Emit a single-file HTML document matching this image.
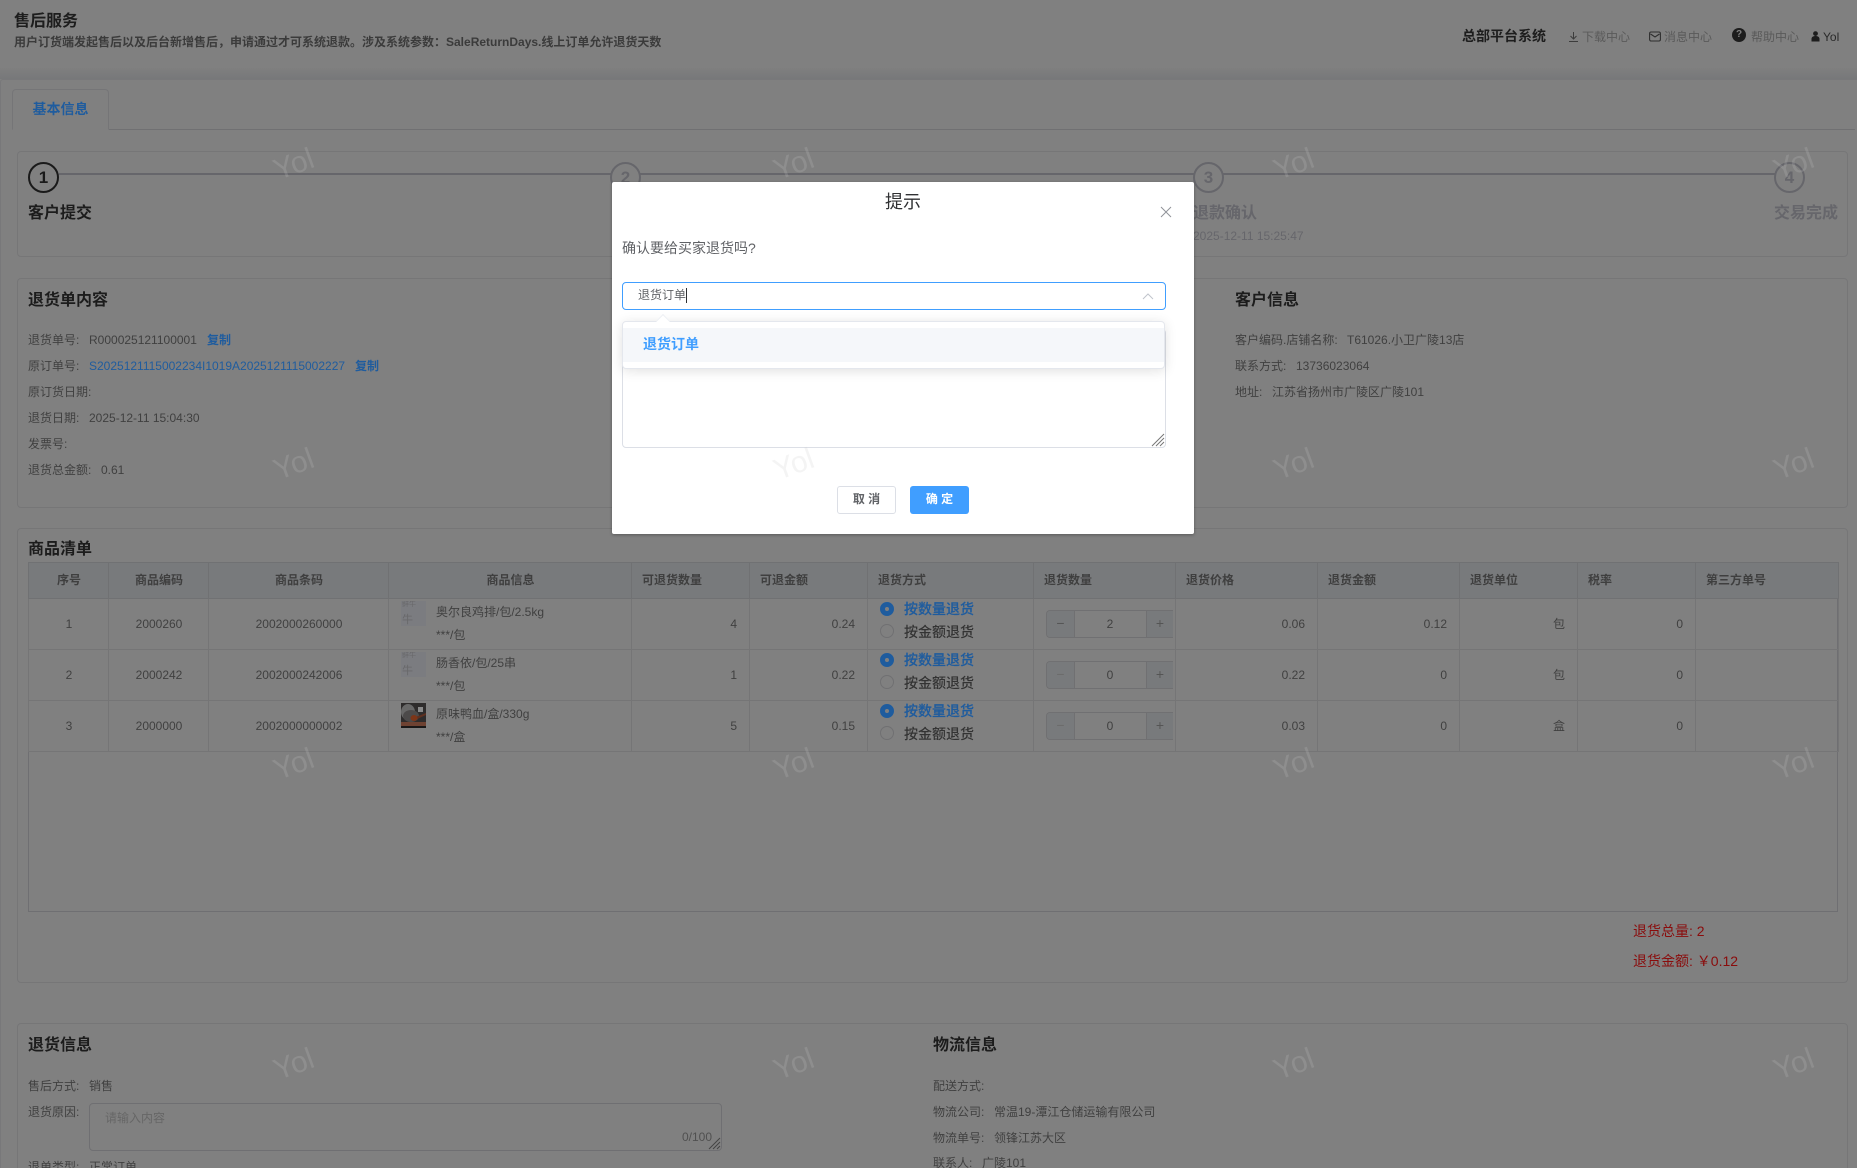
<!DOCTYPE html>
<html lang="zh-CN">
<head>
<meta charset="utf-8">
<title>售后服务</title>
<style>
*{box-sizing:border-box}
html,body{margin:0;padding:0;width:1857px;height:1168px;overflow:hidden;background:#808080}
#app{position:relative;width:1857px;height:1168px;overflow:hidden;background:#808080;color:#3c3c3c;font:12px/20px "Liberation Sans","Noto Sans CJK SC",sans-serif}
.t{position:absolute;white-space:nowrap;line-height:20px;height:20px}
.b{font-weight:700}
.h{font-size:16px;font-weight:700;color:#1c1c1c}
.l{color:#404040}
.a{color:#1f5c9e}
.box{position:absolute;border:1px solid #767677;border-radius:4px}
.c{position:absolute;width:31px;height:31px;border:2px solid #66666b;border-radius:50%;font:700 17px/27px "Liberation Sans",sans-serif;text-align:center;color:#66666b;top:162px;background:#808080}
.wm{position:absolute;width:60px;height:32px;margin:-14px 0 0 -30px;text-align:center;font:30px/32px "Liberation Sans",sans-serif;color:rgba(200,200,200,.2);transform:rotate(-20deg);z-index:50;pointer-events:none}
table{position:absolute;left:28px;top:562px;width:1810px;table-layout:fixed;border-collapse:collapse;color:#404040;font-size:12px}
th{height:36px;background:#787a7c;border:1px solid #707173;font-weight:700;color:#3f3f3f;padding:0 11px 2px 10px;text-align:left}
th.m{text-align:center;padding:0 11px 2px 12px}
td{height:51px;border:1px solid #757576;padding:0 12px 0 11px;text-align:right;position:relative}
td.m{text-align:center;padding:0 11px 0 12px}
.p{position:absolute;left:12px;top:2px;width:25px;height:25px;background:#7b7c80;color:#68686a;overflow:hidden}
.p span{position:absolute;left:1px;white-space:nowrap;line-height:1}
.nm{position:absolute;left:47px;text-align:left;white-space:nowrap}
.r{position:absolute;left:12px;width:14px;height:14px;border-radius:50%;border:1px solid #707072}
.r.on{background:#1f5c9e;border-color:#1f5c9e}
.r.on:after{content:"";position:absolute;left:4px;top:4px;width:4px;height:4px;border-radius:50%;background:#808080}
.rt{position:absolute;left:36px;font-size:14px;font-weight:500;white-space:nowrap;color:#333}
.rt.a{color:#1f5c9e;-webkit-text-stroke:.2px currentColor}
.n{position:absolute;left:12px;top:11px;width:127px;height:28px;border:1px solid #707072;border-right:0;border-radius:4px 0 0 4px;text-align:center;line-height:26px;font-size:12px;overflow:hidden}
.n i{position:absolute;top:0;width:28px;height:26px;background:#787a7c;font-style:normal;color:#555;font-size:14px;line-height:25px}
.n i.mi{left:0;border-right:1px solid #707072}
.n i.pl{right:0;width:27px;border-left:1px solid #707072}
.n i.dis{color:#6c6c6c}
.dlg{position:absolute;left:612px;top:182px;width:582px;height:352px;background:#fff;border-radius:2px;box-shadow:0 1px 3px rgba(0,0,0,.3);z-index:10;color:#606266}
.dlg .t{position:absolute}
</style>
</head>
<body>
<div id="app">

<!-- top header -->
<div class="t" style="left:14px;top:12px;font-size:16px;font-weight:700;color:#1d1d1d">售后服务</div>
<div class="t b" style="left:14px;top:32px;color:#3b3b3b">用户订货端发起售后以及后台新增售后，申请通过才可系统退款。涉及系统参数：SaleReturnDays.线上订单允许退货天数</div>

<div class="t b" style="left:1462px;top:26px;font-size:14px;color:#1d1d1d">总部平台系统</div>
<svg style="position:absolute;left:1568px;top:31px" width="11" height="12" viewBox="0 0 11 12" fill="none" stroke="#3c3c3c" stroke-width="1"><path d="M5.500 1v7M2.500 5l3 3 3-3M1 10.500h9"/></svg>
<div class="t" style="left:1582px;top:27px;color:#5a5a5a">下载中心</div>
<svg style="position:absolute;left:1649px;top:31px" width="12" height="11" viewBox="0 0 12 11" fill="none" stroke="#2e2e2e" stroke-width="1.1"><rect x=".6" y="1" width="10.8" height="9" rx="1.500"/><path d="M1.500 3l4.500 3 4.500-3"/></svg>
<div class="t" style="left:1664px;top:27px;color:#5a5a5a">消息中心</div>
<div style="position:absolute;left:1732px;top:28px;width:14px;height:14px;border-radius:50%;background:#1d1d1d;color:#808080;font:700 10px/14px 'Liberation Sans',sans-serif;text-align:center">?</div>
<div class="t" style="left:1751px;top:27px;color:#5a5a5a">帮助中心</div>
<svg style="position:absolute;left:1811px;top:31px" width="9" height="11" viewBox="0 0 9 11" fill="#1d1d1d"><circle cx="4.500" cy="2.600" r="2.400"/><path d="M.5 10.500V8c0-2 1.600-3 4-3s4 1 4 3v2.500z"/></svg>
<div class="t" style="left:1823px;top:27px;color:#2a2a2a">Yol</div>

<!-- shadow band + outer card -->
<div style="position:absolute;left:0;top:68px;width:1857px;height:11px;background:linear-gradient(#7f7f7f,#77787a)"></div>
<div style="position:absolute;left:0;top:79px;width:1857px;height:1089px;border-top:1px solid #78787a;border-left:1px solid #78787a;border-radius:3px 0 0 0"></div>

<!-- tab -->
<div style="position:absolute;left:12px;top:129px;width:1843px;height:1px;background:#707072"></div>
<div style="position:absolute;left:12px;top:89px;width:97px;height:41px;border:1px solid #757577;border-bottom:1px solid #808080;border-radius:4px 4px 0 0;background:#808080;text-align:center;line-height:39px;font-size:14px;font-weight:700;color:#1f5c9e">基本信息</div>

<!-- steps -->
<div class="box" style="left:17px;top:151px;width:1831px;height:106px"></div>
<div style="position:absolute;left:59px;top:173px;width:1720px;height:2px;background:#66666b"></div>
<div class="c" style="left:28px;border-color:#1a1a1a;color:#1a1a1a">1</div>
<div class="c" style="left:610px">2</div>
<div class="c" style="left:1193px">3</div>
<div class="c" style="left:1774px">4</div>
<div class="t b" style="left:28px;top:204px;font-size:16px;color:#1c1c1c">客户提交</div>
<div class="t b" style="left:1193px;top:204px;font-size:16px;color:#66666b">退款确认</div>
<div class="t b" style="left:1774px;top:204px;font-size:16px;color:#66666b">交易完成</div>
<div class="t" style="left:1193px;top:226px;color:#66666b">2025-12-11 15:25:47</div>

<!-- order panel -->
<div class="box" style="left:17px;top:278px;width:1831px;height:230px"></div>
<div class="t h" style="left:28px;top:291px">退货单内容</div>
<div class="t l" style="left:28px;top:330px">退货单号:</div><div class="t l" style="left:89px;top:330px">R000025121100001</div><div class="t b a" style="left:207px;top:330px">复制</div>
<div class="t l" style="left:28px;top:356px">原订单号:</div><div class="t a" style="left:89px;top:356px">S2025121115002234I1019A2025121115002227</div><div class="t b a" style="left:355px;top:356px">复制</div>
<div class="t l" style="left:28px;top:382px">原订货日期:</div>
<div class="t l" style="left:28px;top:408px">退货日期:</div><div class="t l" style="left:89px;top:408px">2025-12-11 15:04:30</div>
<div class="t l" style="left:28px;top:434px">发票号:</div>
<div class="t l" style="left:28px;top:460px">退货总金额:</div><div class="t l" style="left:101px;top:460px">0.61</div>

<div class="t h" style="left:1235px;top:291px">客户信息</div>
<div class="t l" style="left:1235px;top:330px">客户编码.店铺名称:</div><div class="t l" style="left:1347px;top:330px">T61026.小卫广陵13店</div>
<div class="t l" style="left:1235px;top:356px">联系方式:</div><div class="t l" style="left:1296px;top:356px">13736023064</div>
<div class="t l" style="left:1235px;top:382px">地址:</div><div class="t l" style="left:1272px;top:382px">江苏省扬州市广陵区广陵101</div>

<!-- goods panel -->
<div class="box" style="left:17px;top:528px;width:1831px;height:455px"></div>
<div class="t h" style="left:28px;top:540px">商品清单</div>
<div style="position:absolute;left:28px;top:562px;width:1810px;height:350px;border:1px solid #6f6f72"></div>
<table>
<colgroup><col style="width:80px"><col style="width:100px"><col style="width:180px"><col style="width:243px"><col style="width:118px"><col style="width:118px"><col style="width:166px"><col style="width:142px"><col style="width:142px"><col style="width:142px"><col style="width:118px"><col style="width:118px"><col style="width:143px"></colgroup>
<tr><th class="m">序号</th><th class="m">商品编码</th><th class="m">商品条码</th><th class="m">商品信息</th><th>可退货数量</th><th>可退金额</th><th>退货方式</th><th>退货数量</th><th>退货价格</th><th>退货金额</th><th>退货单位</th><th>税率</th><th>第三方单号</th></tr>
<tr><td class="m">1</td><td class="m">2000260</td><td class="m">2002000260000</td>
<td><div class="p"><span style="top:0;font-size:7px">鲜牛</span><span style="top:14px;font-size:11px">牛</span></div><div class="nm" style="top:3px">奥尔良鸡排/包/2.5kg</div><div class="nm" style="top:26px">***/包</div></td>
<td>4</td><td>0.24</td>
<td><span class="r on" style="top:3px"></span><span class="rt a" style="top:0">按数量退货</span><span class="r" style="top:25px"></span><span class="rt" style="top:23px">按金额退货</span></td>
<td><div class="n"><i class="mi">−</i>2<i class="pl">+</i></div></td>
<td>0.06</td><td>0.12</td><td>包</td><td>0</td><td></td></tr>
<tr><td class="m">2</td><td class="m">2000242</td><td class="m">2002000242006</td>
<td><div class="p"><span style="top:0;font-size:7px">鲜牛</span><span style="top:14px;font-size:11px">牛</span></div><div class="nm" style="top:3px">肠香依/包/25串</div><div class="nm" style="top:26px">***/包</div></td>
<td>1</td><td>0.22</td>
<td><span class="r on" style="top:3px"></span><span class="rt a" style="top:0">按数量退货</span><span class="r" style="top:25px"></span><span class="rt" style="top:23px">按金额退货</span></td>
<td><div class="n"><i class="mi dis">−</i>0<i class="pl">+</i></div></td>
<td>0.22</td><td>0</td><td>包</td><td>0</td><td></td></tr>
<tr><td class="m">3</td><td class="m">2000000</td><td class="m">2002000000002</td>
<td><div class="p" style="background:none"><svg width="25" height="25" viewBox="0 0 25 25" style="display:block"><rect width="25" height="25" fill="#2e2c2c"/><ellipse cx="7" cy="9" rx="7" ry="8" fill="#686868"/><ellipse cx="10" cy="13" rx="8" ry="6" fill="#4c4a4a"/><rect x="17" y="4" width="5" height="5" fill="#8a8a8a"/><path d="M12 15L25 10v2L14 17z" fill="#5e3020"/><ellipse cx="13" cy="15" rx="3.500" ry="3" fill="#7c3518"/><rect y="19" width="25" height="4" fill="#6e4232"/><rect y="23" width="25" height="2" fill="#1a1818"/></svg></div><div class="nm" style="top:3px">原味鸭血/盒/330g</div><div class="nm" style="top:26px">***/盒</div></td>
<td>5</td><td>0.15</td>
<td><span class="r on" style="top:3px"></span><span class="rt a" style="top:0">按数量退货</span><span class="r" style="top:25px"></span><span class="rt" style="top:23px">按金额退货</span></td>
<td><div class="n"><i class="mi dis">−</i>0<i class="pl">+</i></div></td>
<td>0.03</td><td>0</td><td>盒</td><td>0</td><td></td></tr>
</table>
<div class="t" style="left:1633px;top:921px;font-size:14px;color:#8a0c0c">退货总量: 2</div>
<div class="t" style="left:1633px;top:951px;font-size:14px;color:#8a0c0c">退货金额: ￥0.12</div>

<!-- bottom panel -->
<div class="box" style="left:17px;top:1023px;width:1831px;height:170px"></div>
<div class="t h" style="left:28px;top:1036px">退货信息</div>
<div class="t l" style="left:28px;top:1076px">售后方式:</div><div class="t l" style="left:89px;top:1076px">销售</div>
<div class="t l" style="left:28px;top:1102px">退货原因:</div>
<div style="position:absolute;left:89px;top:1103px;width:633px;height:48px;border:1px solid #6f6f72;border-radius:4px"></div>
<div class="t" style="left:105px;top:1108px;color:#666">请输入内容</div>
<div class="t" style="left:682px;top:1127px;color:#505050">0/100</div>
<svg style="position:absolute;left:708px;top:1137px" width="13" height="13" viewBox="0 0 13 13" stroke="#444" stroke-width="1" fill="none"><path d="M1 12L12 1M5 12l7-7M9 12l3-3"/></svg>
<div class="t l" style="left:28px;top:1157px">退单类型:</div><div class="t l" style="left:89px;top:1157px">正常订单</div>

<div class="t h" style="left:933px;top:1036px">物流信息</div>
<div class="t l" style="left:933px;top:1076px">配送方式:</div>
<div class="t l" style="left:933px;top:1102px">物流公司:</div><div class="t l" style="left:994px;top:1102px">常温19-潭江仓储运输有限公司</div>
<div class="t l" style="left:933px;top:1128px">物流单号:</div><div class="t l" style="left:994px;top:1128px">领锋江苏大区</div>
<div class="t l" style="left:933px;top:1153px">联系人:</div><div class="t l" style="left:982px;top:1153px">广陵101</div>

<!-- dialog -->
<div class="dlg">
  <div class="t" style="left:0;width:582px;top:10px;text-align:center;font-size:18px;color:#303133">提示</div>
  <svg style="position:absolute;left:548px;top:24px" width="12" height="12" viewBox="0 0 12 12" stroke="#909399" stroke-width="1" fill="none"><path d="M1 1l10 10M11 1L1 11"/></svg>
  <div class="t" style="left:10px;top:56px;font-size:14px;color:#606266">确认要给买家退货吗?</div>

  <div style="position:absolute;left:10px;top:100px;width:544px;height:28px;border:1px solid #409eff;border-radius:4px"></div>
  <div class="t" style="left:26px;top:103px;color:#606266">退货订单</div>
  <div style="position:absolute;left:74px;top:106px;width:1px;height:15px;background:#303133"></div>
  <svg style="position:absolute;left:530px;top:111px" width="12" height="7" viewBox="0 0 12 7" stroke="#c0c4cc" stroke-width="1" fill="none"><path d="M1 6l5-5 5 5"/></svg>

  <div style="position:absolute;left:10px;top:147px;width:544px;height:119px;border:1px solid #dcdfe6;border-radius:4px"></div>
  <svg style="position:absolute;left:539px;top:251px" width="14" height="14" viewBox="0 0 14 14" stroke="#777" stroke-width="1" fill="none"><path d="M1 13L13 1M5 13l8-8M9 13l4-4"/></svg>

  <div style="position:absolute;left:10px;top:139px;width:543px;height:48px;background:#fff;border:1px solid #e4e7ed;border-radius:4px;box-shadow:0 2px 12px rgba(0,0,0,.12)"></div>
  <div style="position:absolute;left:46px;top:134px;width:10px;height:10px;background:#fff;transform:rotate(45deg);border-left:1px solid #eef0f4;border-top:1px solid #eef0f4"></div>
  <div style="position:absolute;left:11px;top:146px;width:541px;height:34px;background:#f5f7fa"></div>
  <div class="t b" style="left:31px;top:152px;font-size:14px;color:#409eff">退货订单</div>

  <div style="position:absolute;left:225px;top:304px;width:59px;height:28px;border:1px solid #dcdfe6;border-radius:3px;background:#fff;text-align:center;line-height:25px;font-weight:700;color:#606266">取 消</div>
  <div style="position:absolute;left:298px;top:304px;width:59px;height:28px;border-radius:3px;background:#409eff;text-align:center;line-height:27px;font-weight:700;color:#fff">确 定</div>
</div>

<!-- watermarks -->
<div class="wm" style="left:294px;top:163px">Yol</div><div class="wm" style="left:794px;top:163px">Yol</div><div class="wm" style="left:1294px;top:163px">Yol</div><div class="wm" style="left:1794px;top:163px">Yol</div>
<div class="wm" style="left:294px;top:463px">Yol</div><div class="wm" style="left:794px;top:463px">Yol</div><div class="wm" style="left:1294px;top:463px">Yol</div><div class="wm" style="left:1794px;top:463px">Yol</div>
<div class="wm" style="left:294px;top:763px">Yol</div><div class="wm" style="left:794px;top:763px">Yol</div><div class="wm" style="left:1294px;top:763px">Yol</div><div class="wm" style="left:1794px;top:763px">Yol</div>
<div class="wm" style="left:294px;top:1063px">Yol</div><div class="wm" style="left:794px;top:1063px">Yol</div><div class="wm" style="left:1294px;top:1063px">Yol</div><div class="wm" style="left:1794px;top:1063px">Yol</div>

</div>
</body>
</html>
